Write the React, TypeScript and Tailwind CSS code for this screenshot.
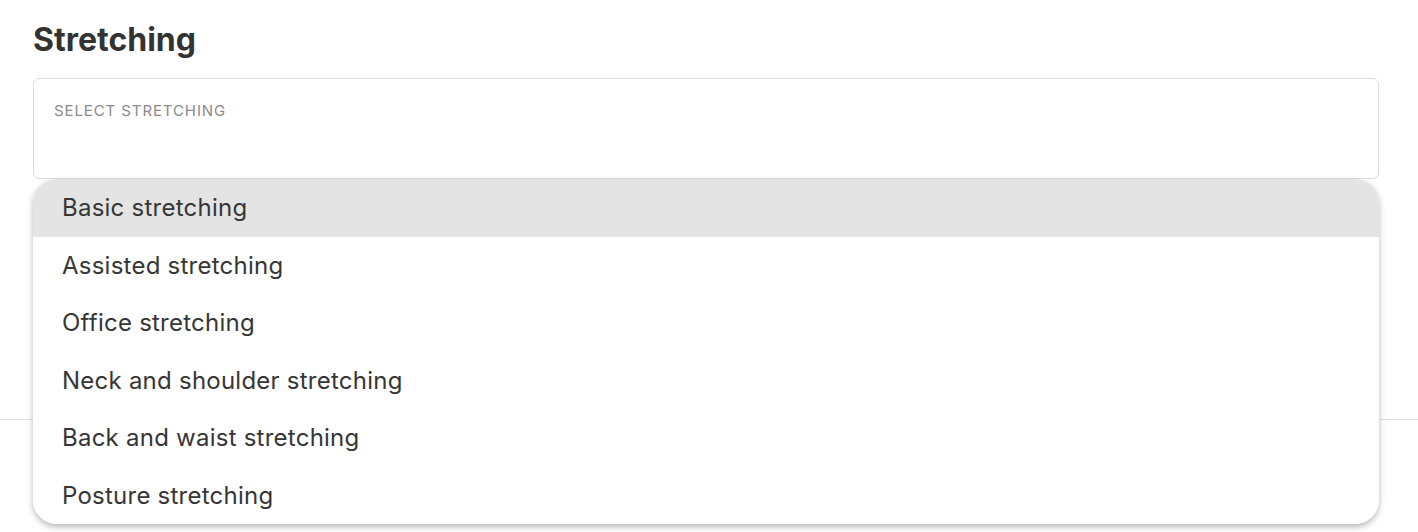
import type { FC } from "react";

const options = [
  "Basic stretching",
  "Assisted stretching",
  "Office stretching",
  "Neck and shoulder stretching",
  "Back and waist stretching",
  "Posture stretching",
];

const StretchingSelect: FC = () => {
  return (
    <div className="relative">
      <div className="h-[101px] rounded-[6px] border border-[#dcdcdc] bg-white px-[20px] pt-[19px]">
        <span className="text-[15px] uppercase tracking-[0.06em] text-[#8a8a8a]">
          Select stretching
        </span>
      </div>
      <ul className="absolute left-0 right-0 top-[101px] z-10 overflow-hidden rounded-[24px] bg-white shadow-[0_3px_6px_rgba(0,0,0,0.28)]">
        {options.map((option, i) => (
          <li
            key={option}
            className={`flex h-[57.5px] items-center pl-[29px] pt-[1px] text-[24px] tracking-[0.01em] text-[#363636] ${
              i === 0 ? "bg-[#e4e4e4]" : "bg-white"
            }`}
          >
            {option}
          </li>
        ))}
      </ul>
    </div>
  );
};

export default function App() {
  return (
    <div className="min-h-[532px] bg-white font-['Inter',sans-serif]">
      <div className="pl-[33px] pr-[39px] pt-[21px]">
        <h2 className="mb-[19px] text-[32px] font-bold leading-[38px] text-[#333]">Stretching</h2>
        <StretchingSelect />
      </div>
      <div className="mt-[240px] border-t border-[#e3e3e3]" />
    </div>
  );
}
